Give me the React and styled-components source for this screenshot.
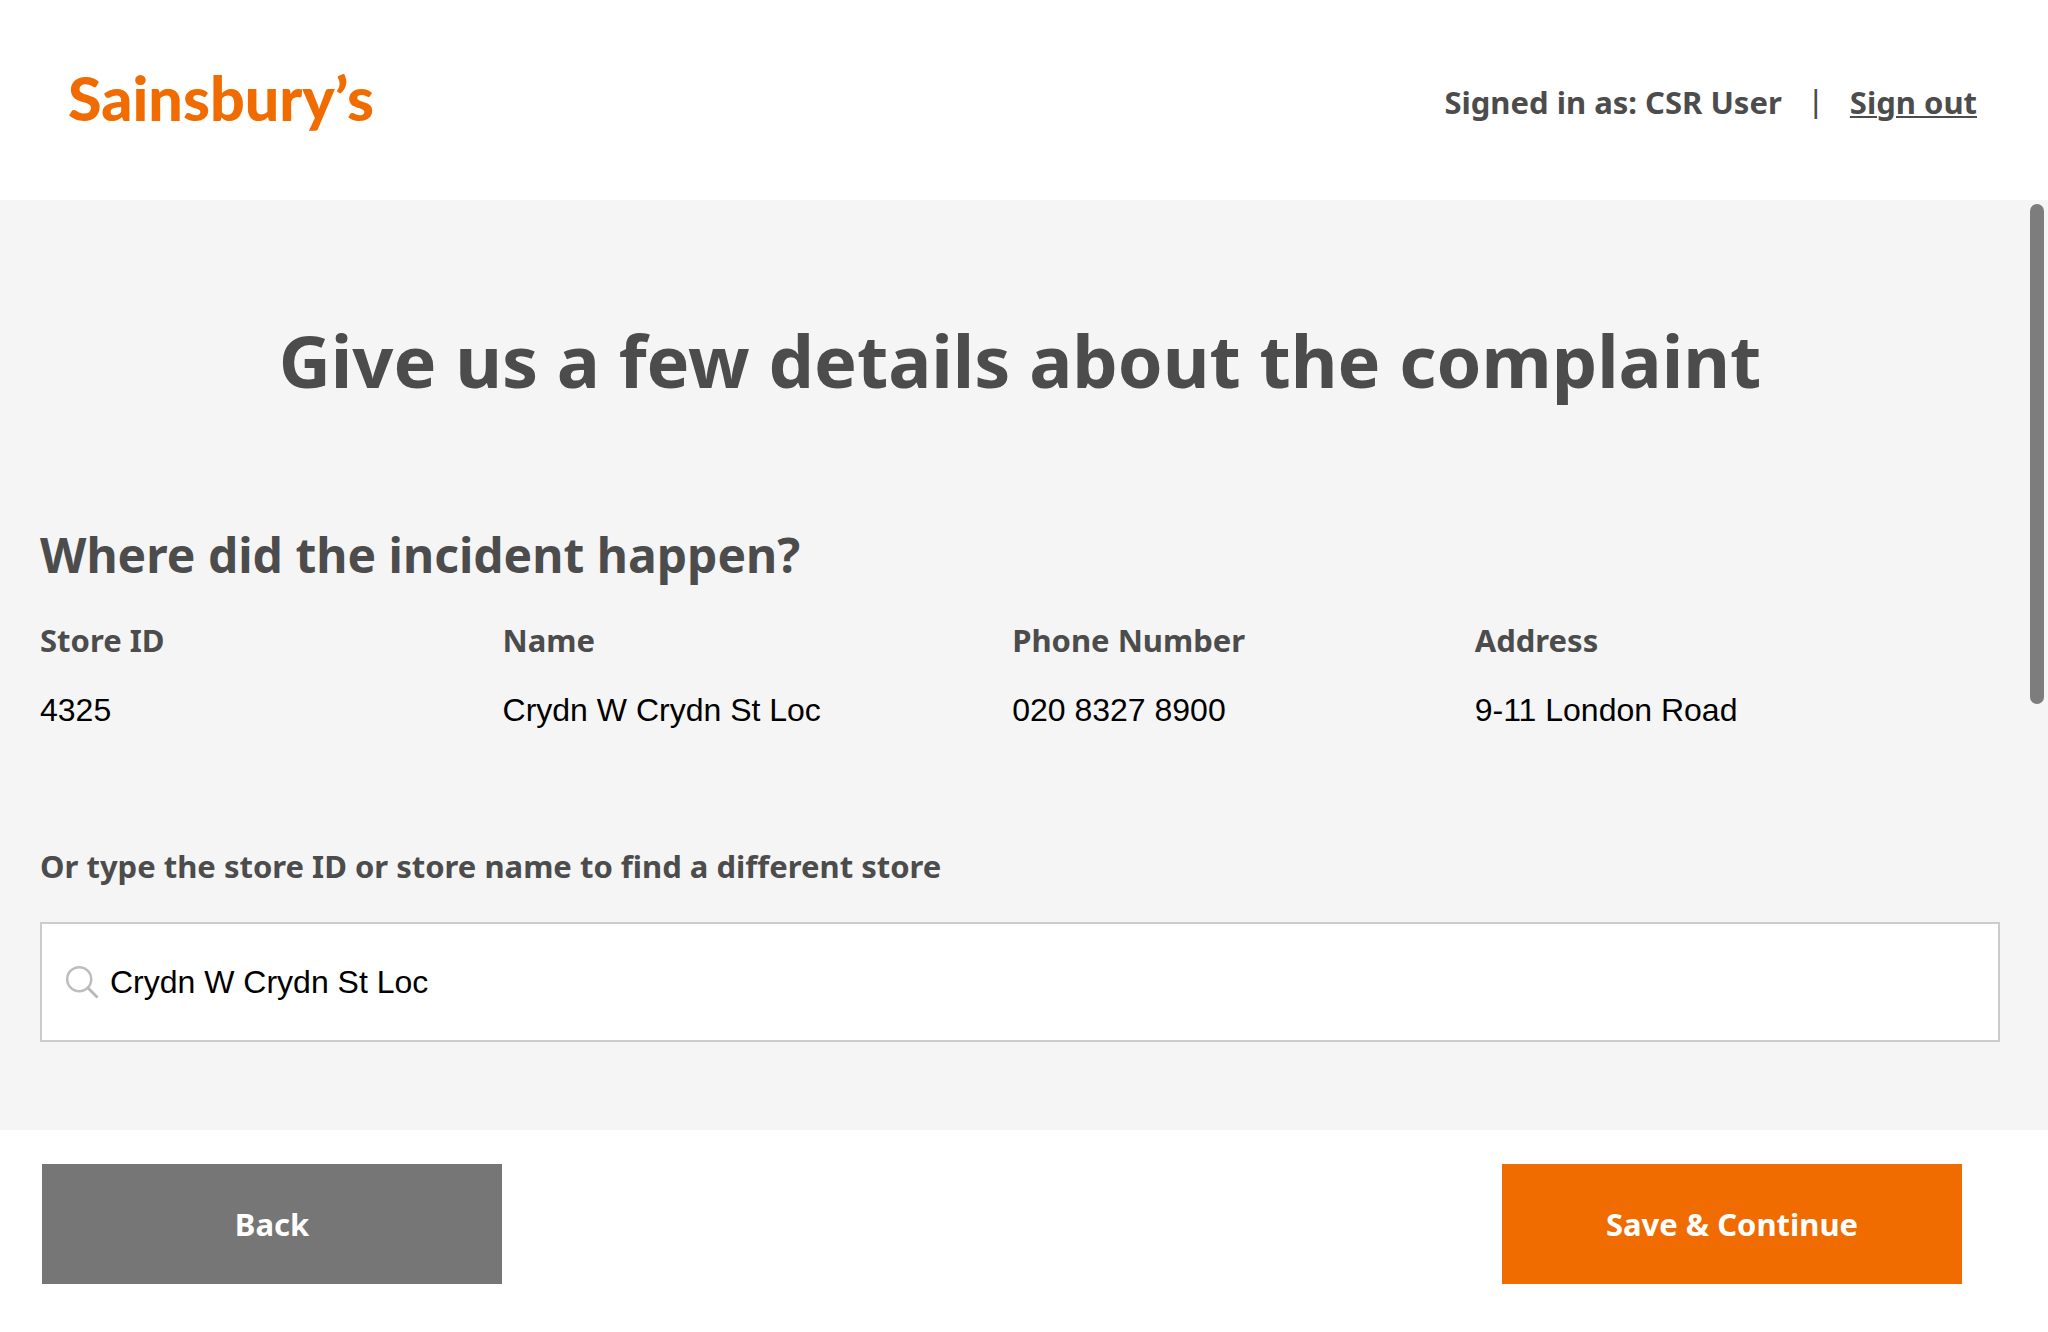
import React, { useState } from 'react';
import styled, { createGlobalStyle } from 'styled-components';

const heading = '"Noto Sans", "Open Sans", sans-serif';
const body = '"Liberation Sans", Arial, sans-serif';

const GlobalStyle = createGlobalStyle`
  *, *::before, *::after { box-sizing: border-box; }
  body { margin: 0; background: #fff; color: #4c4c4c; font-family: ${heading}; }
`;

const Page = styled.div`
  display: flex;
  flex-direction: column;
  min-height: 100vh;
`;

const Header = styled.header`
  display: flex;
  justify-content: space-between;
  align-items: flex-start;
  padding: 60px 71px 56px 68px;
`;

const Logo = styled.a`
  color: #f06c00;
  font: 900 61px/76px Lato, sans-serif;
  text-decoration: none;
`;

const Account = styled.div`
  display: flex;
  align-items: center;
  gap: 30px;
  font-size: 31px;
  line-height: 84px;
  font-weight: 700;
`;

const Divider = styled.span`
  font-family: ${body};
  font-weight: 400;
`;

const SignOut = styled.a`
  color: inherit;
  text-decoration: underline;
  text-decoration-thickness: 2px;
  text-underline-offset: 2px;
`;

const Main = styled.main`
  position: relative;
  flex: 1;
  padding: 115px 48px 88px 40px;
  background: #f5f5f5;
`;

const ScrollThumb = styled.div`
  position: absolute;
  top: 4px;
  right: 4px;
  width: 14px;
  height: 500px;
  border-radius: 7px;
  background: #7d7d7d;
`;

const Title = styled.h1`
  margin: 0 0 120px;
  font-size: 72px;
  line-height: 90px;
  text-align: center;
`;

const SectionTitle = styled.h2`
  margin: 0 0 35px;
  font-size: 48px;
  line-height: 60px;
`;

const StoreTable = styled.table`
  width: 100%;
  margin-bottom: 116px;
  border-collapse: collapse;
  table-layout: fixed;
`;

const HeadCell = styled.th`
  width: ${(p) => p.$width};
  padding: 0 0 30px;
  font-size: 31px;
  line-height: 40px;
  text-align: left;
`;

const Cell = styled.td`
  padding: 0;
  color: #000;
  font: 32px/40px ${body};
`;

const FieldLabel = styled.label`
  display: block;
  margin-bottom: 36px;
  font-size: 31px;
  line-height: 40px;
  font-weight: 700;
`;

const SearchBox = styled.div`
  display: flex;
  align-items: center;
  gap: 10px;
  height: 120px;
  padding: 0 22px;
  border: 2px solid #ccc;
  background: #fff;
`;

const SearchInput = styled.input`
  flex: 1;
  min-width: 0;
  padding: 0;
  border: 0;
  outline: 0;
  background: none;
  color: #000;
  font: 32px/40px ${body};
`;

const Footer = styled.footer`
  display: flex;
  justify-content: space-between;
  padding: 34px 86px 48px 42px;
`;

const Button = styled.button`
  width: 460px;
  height: 120px;
  padding: 0;
  border: 0;
  background: ${(p) => (p.$primary ? '#f06c00' : '#767676')};
  color: #fff;
  font: 700 31px/40px ${heading};
  cursor: pointer;
`;

const SearchIcon = () => (
  <svg width="36" height="36" viewBox="0 0 36 36" fill="none" aria-hidden="true">
    <circle cx="15.2" cy="15.2" r="12" stroke="#bdbdbd" strokeWidth="2.5" />
    <path d="M24 24 33.5 33.5" stroke="#b8b8b8" strokeWidth="2.8" />
  </svg>
);

const columns = [
  { label: 'Store ID', value: '4325', width: '23.6%' },
  { label: 'Name', value: 'Crydn W Crydn St Loc', width: '26%' },
  { label: 'Phone Number', value: '020 8327 8900', width: '23.6%' },
  { label: 'Address', value: '9-11 London Road', width: 'auto' },
];

export default function App() {
  const [query, setQuery] = useState('Crydn W Crydn St Loc');
  return (
    <Page>
      <GlobalStyle />
      <Header>
        <Logo href="#">Sainsbury’s</Logo>
        <Account>
          <span>Signed in as: CSR User</span>
          <Divider>|</Divider>
          <SignOut href="#">Sign out</SignOut>
        </Account>
      </Header>
      <Main>
        <Title>Give us a few details about the complaint</Title>
        <SectionTitle>Where did the incident happen?</SectionTitle>
        <StoreTable>
          <thead>
            <tr>
              {columns.map((c) => (
                <HeadCell key={c.label} scope="col" $width={c.width}>{c.label}</HeadCell>
              ))}
            </tr>
          </thead>
          <tbody>
            <tr>
              {columns.map((c) => (
                <Cell key={c.label}>{c.value}</Cell>
              ))}
            </tr>
          </tbody>
        </StoreTable>
        <FieldLabel htmlFor="store">Or type the store ID or store name to find a different store</FieldLabel>
        <SearchBox>
          <SearchIcon />
          <SearchInput id="store" type="text" value={query} onChange={(e) => setQuery(e.target.value)} />
        </SearchBox>
        <ScrollThumb />
      </Main>
      <Footer>
        <Button type="button">Back</Button>
        <Button type="submit" $primary>Save &amp; Continue</Button>
      </Footer>
    </Page>
  );
}
